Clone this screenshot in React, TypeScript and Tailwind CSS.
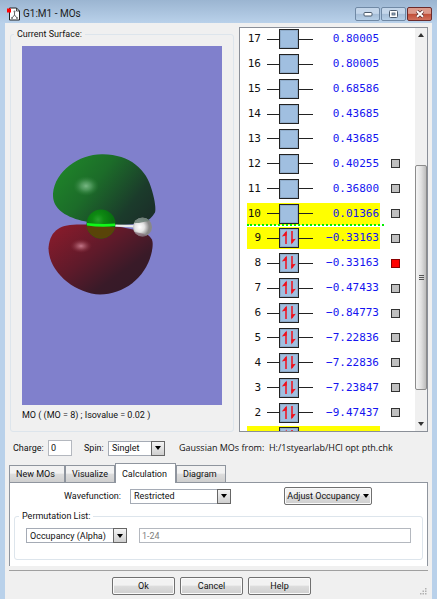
import type { ReactNode, SelectHTMLAttributes } from "react";
import { useState } from "react";
import clsx from "clsx";

type Orbital = {
  id: number;
  energy: string;
  cube?: boolean;
};

const ORBITALS: Orbital[] = [
  { id: 17, energy: "0.80005" },
  { id: 16, energy: "0.80005" },
  { id: 15, energy: "0.68586" },
  { id: 14, energy: "0.43685" },
  { id: 13, energy: "0.43685" },
  { id: 12, energy: "0.40255", cube: true },
  { id: 11, energy: "0.36800", cube: true },
  { id: 10, energy: "0.01366", cube: true },
  { id: 9, energy: "−0.33163", cube: true },
  { id: 8, energy: "−0.33163", cube: true },
  { id: 7, energy: "−0.47433", cube: true },
  { id: 6, energy: "−0.84773", cube: true },
  { id: 5, energy: "−7.22836", cube: true },
  { id: 4, energy: "−7.22836", cube: true },
  { id: 3, energy: "−7.23847", cube: true },
  { id: 2, energy: "−9.47437", cube: true },
];

const HOMO = 9;
const SELECTED = [10, 9];
const TABS = ["New MOs", "Visualize", "Calculation", "Diagram"];

const AppIcon = () => (
  <svg className="h-[14px] w-[13px]" viewBox="0 0 13 14" aria-hidden="true">
    <path d="M2.500 1h7l3 3v9H2.500z" fill="#fff" stroke="#222" strokeWidth="1" />
    <path d="M9.500 1v3h3" fill="none" stroke="#222" strokeWidth=".8" />
    <path d="M7.500 4v4M7.500 8l-2.500 3M7.500 8l2.500 3" stroke="#555" strokeWidth=".9" />
    <circle cx="7.500" cy="4.500" r="1" fill="#777" />
    <circle cx="5" cy="11" r="1" fill="#777" />
    <circle cx="10" cy="11" r="1" fill="#777" />
    <rect x="0" y="1.500" width="4" height="4" fill="#f00" />
  </svg>
);

const TitleButton = ({ label, danger, children }: { label: string; danger?: boolean; children: ReactNode }) => (
  <button
    aria-label={label}
    className={clsx(
      "flex h-[14px] w-[25px] items-center justify-center rounded-[2px] border",
      danger
        ? "border-[#6b2a2a] bg-linear-to-b from-[#dc9a8c] from-45% via-[#c04c36] via-50% to-[#d0705c]"
        : "border-[#7089a5] bg-linear-to-b from-[#c4d6ea] from-45% via-[#a5bdd7] via-50% to-[#b6cfe7]"
    )}
  >
    {children}
  </button>
);

const TitleBar = () => (
  <header className="-mx-[5px] flex h-[23px] shrink-0 items-center justify-between bg-linear-to-b from-[#9bb5d1] to-[#b9d1ea] pt-1 pr-[5px] pl-[7px]">
    <div className="flex items-center gap-[3px]">
      <AppIcon />
      <h1 className="font-[Roboto,sans-serif] text-[10px] leading-4 text-[#1c1c1c]">G1:M1 - MOs</h1>
    </div>
    <div className="flex gap-px">
      <TitleButton label="Minimize">
        <svg width="10" height="6" viewBox="0 0 10 6">
          <rect x="1" y="1.500" width="8" height="3.500" rx="1" fill="#fff" stroke="#4a5a6c" />
        </svg>
      </TitleButton>
      <TitleButton label="Maximize">
        <svg width="9" height="8" viewBox="0 0 9 8">
          <rect x=".5" y=".5" width="8" height="7" rx="1" fill="#fff" stroke="#4a5a6c" />
          <rect x="3" y="3" width="3" height="2" fill="#9db4cd" stroke="#4a5a6c" strokeWidth=".8" />
        </svg>
      </TitleButton>
      <TitleButton label="Close" danger>
        <svg width="10" height="8" viewBox="0 0 10 8">
          <path d="M2 1.200l6 5.600M8 1.200L2 6.800" stroke="#5a2a2a" strokeWidth="3.400" />
          <path d="M2 1.200l6 5.600M8 1.200L2 6.800" stroke="#fff" strokeWidth="2" />
        </svg>
      </TitleButton>
    </div>
  </header>
);

const Molecule = () => (
  <svg className="block h-full w-full bg-[#8080cc]" viewBox="22 46 200 358" role="img" aria-label="Molecular orbital surface">
    <defs>
      <linearGradient id="green" x1="0" y1=".2" x2="1" y2=".75">
        <stop offset="0" stopColor="#1f8629" />
        <stop offset=".4" stopColor="#1c6c29" />
        <stop offset=".8" stopColor="#1b3b2b" />
        <stop offset="1" stopColor="#1b3029" />
      </linearGradient>
      <linearGradient id="red" x1="0" y1=".15" x2=".8" y2=".9">
        <stop offset="0" stopColor="#861b2b" />
        <stop offset=".45" stopColor="#5f1a2a" />
        <stop offset=".8" stopColor="#391a28" />
        <stop offset="1" stopColor="#351a28" />
      </linearGradient>
      <radialGradient id="shineGreen">
        <stop offset="0" stopColor="#78b884" />
        <stop offset=".4" stopColor="#58a065" stopOpacity=".8" />
        <stop offset="1" stopColor="#2d8038" stopOpacity="0" />
      </radialGradient>
      <radialGradient id="shineRed">
        <stop offset="0" stopColor="#c4788a" />
        <stop offset=".4" stopColor="#a85868" stopOpacity=".7" />
        <stop offset="1" stopColor="#802838" stopOpacity="0" />
      </radialGradient>
      <radialGradient id="chlorine" cx=".4" cy=".35">
        <stop offset="0" stopColor="#28a02c" />
        <stop offset=".4" stopColor="#0e8a12" />
        <stop offset="1" stopColor="#087010" />
      </radialGradient>
      <radialGradient id="hydrogen" cx=".35" cy=".5">
        <stop offset="0" stopColor="#fff" />
        <stop offset=".5" stopColor="#e4e4e4" />
        <stop offset="1" stopColor="#888" />
      </radialGradient>
      <clipPath id="clLower">
        <path d="M86 225.500Q101 224 116 227v13H86z" />
      </clipPath>
      <clipPath id="hUpper">
        <path d="M132 217h20v3q-8 1-13 2.500h-7z" />
      </clipPath>
      <clipPath id="hLower">
        <path d="M132 231q9 1 18 5v3h-18z" />
      </clipPath>
    </defs>
    <path
      d="M103 153.700C130 154 147 169 152 190C155 200 156 209 155 212C152 217 149 219 146 221C132 225 115 225 103 223.500C88 222 68 219 58 208C53 202 53 197 53 193C55 170 80 153 103 153.700Z"
      fill="url(#green)"
    />
    <ellipse cx="86" cy="185.500" rx="13" ry="10" fill="url(#shineGreen)" />
    <path
      d="M70 224.500C90 223 122 225 143 231.500C153 237 153 240 152.500 247C149 275 125 294 100 294C75 293 49 272 48.500 248C49 237 54 226 70 224.500Z"
      fill="url(#red)"
    />
    <ellipse cx="81" cy="245.500" rx="11" ry="7" fill="url(#shineRed)" />
    <path d="M113 224l22 .6v2.400l-22 -1z" fill="#e8ece8" />
    <circle cx="101" cy="223.500" r="14.500" fill="url(#chlorine)" />
    <circle cx="101" cy="223.500" r="14.500" fill="#594408" clipPath="url(#clLower)" />
    <path d="M87 222.500q14 1.500 28 .6v2.400q-14 1.500-28 -.6z" fill="#10f818" />
    <circle cx="142.500" cy="226.500" r="9.500" fill="url(#hydrogen)" />
    <circle cx="142.500" cy="226.500" r="9.500" fill="#6c8078" fillOpacity=".85" clipPath="url(#hUpper)" />
    <circle cx="142.500" cy="226.500" r="9.500" fill="#7a5868" fillOpacity=".6" clipPath="url(#hLower)" />
  </svg>
);

const Occupancy = ({ filled }: { filled: boolean }) => (
  <div className="flex items-center">
    <span className="h-px w-3 bg-[#222]" />
    <span className="flex size-5 items-center justify-center border border-[#222] bg-[#a0bfe0] shadow-[inset_0_0_0_1px_#8fabc9]">
      {filled && (
        <svg width="16" height="16" viewBox="0 0 16 16">
          <path d="M5 14V2M11 1v12" stroke="#f0101c" strokeWidth="1.500" />
          <path d="M5.700 .5V5.500L.8 6.500z" fill="#f0101c" />
          <path d="M10.300 14.500V9.500L14.800 8.800z" fill="#f0101c" />
        </svg>
      )}
    </span>
    <span className="h-px w-[14px] bg-[#222]" />
  </div>
);

const OrbitalRow = ({ orbital, current, onPick }: { orbital: Orbital; current: boolean; onPick: () => void }) => (
  <li className="relative flex items-center justify-between pr-[15px] pl-[7px]">
    <div
      className={clsx(
        "flex h-[22px] w-[133px] items-center justify-between pr-px",
        SELECTED.includes(orbital.id) && "bg-[#ffff00]"
      )}
    >
      <div className="flex items-center gap-[6px]">
        <span className="w-[14px] text-right text-[#111]">{orbital.id}</span>
        <Occupancy filled={orbital.id <= HOMO} />
      </div>
      <span className="text-[#1414f0]">{orbital.energy}</span>
    </div>
    {orbital.cube && (
      <button
        aria-label={`Show orbital ${orbital.id}`}
        onClick={onPick}
        className={clsx("size-[9px] border", current ? "border-[#8b0000] bg-[#ff0000]" : "border-[#333] bg-[#c0c0c0]")}
      />
    )}
    {orbital.id === HOMO + 1 && (
      <span className="absolute bottom-0 left-[7px] w-[137px] border-t-2 border-dotted border-[#00f000]" />
    )}
  </li>
);

const ScrollBar = () => (
  <div className="flex w-3 shrink-0 flex-col items-center bg-[#f0f0f0] py-[5px]" aria-hidden="true">
    <svg width="6" height="4" viewBox="0 0 6 4">
      <path d="M3 0l3 4H0z" fill="#333" />
    </svg>
    <div className="flex-[128]" />
    <div className="flex w-full flex-[224] flex-col items-center justify-center gap-px rounded-[2px] border border-[#8c8c8c] bg-linear-to-r from-[#f5f5f5] via-[#e2e2e2] to-[#bcbcbc]">
      <i className="h-px w-[5px] bg-[#555]" />
      <i className="h-px w-[5px] bg-[#555]" />
      <i className="h-px w-[5px] bg-[#555]" />
    </div>
    <div className="flex-[32]" />
    <svg width="6" height="4" viewBox="0 0 6 4">
      <path d="M0 0h6L3 4z" fill="#333" />
    </svg>
  </div>
);

const OrbitalList = () => {
  const [current, setCurrent] = useState(8);

  return (
    <section className="flex w-[189px] shrink-0 overflow-hidden border border-[#8a8f98] bg-white" aria-label="Orbitals">
      <div className="flex-1">
        <ul className="-mt-px grid h-[398px] auto-rows-fr font-['DejaVu_Sans_Mono',monospace] text-[11px] leading-4">
          {ORBITALS.map((orbital) => (
            <OrbitalRow
              key={orbital.id}
              orbital={orbital}
              current={orbital.id === current}
              onPick={() => setCurrent(orbital.id)}
            />
          ))}
        </ul>
        {/* row 1 is mostly scrolled out of view */}
        <div className="mt-px ml-[7px] h-[22px] w-[133px] bg-[#ffff00] pt-px pl-5">
          <Occupancy filled />
        </div>
      </div>
      <ScrollBar />
    </section>
  );
};

const Select = ({ className, children, ...rest }: SelectHTMLAttributes<HTMLSelectElement>) => (
  <div className={clsx("relative", className)}>
    <select
      {...rest}
      className="block h-[15px] w-full appearance-none border border-[#a5abb5] bg-white pr-4 pl-[3px] leading-[12px]"
    >
      {children}
    </select>
    <span className="pointer-events-none absolute inset-y-0 right-0 flex w-[14px] items-center justify-center border border-[#666] bg-linear-to-b from-[#f4f4f4] to-[#cfcfcf]">
      <svg width="6" height="4" viewBox="0 0 6 4">
        <path d="M0 0h6L3 4z" fill="#000" />
      </svg>
    </span>
  </div>
);

const Button = ({ className, children }: { className?: string; children: ReactNode }) => (
  <button
    className={clsx(
      "flex h-[18px] items-center justify-center rounded-[2px] border border-[#707070] bg-linear-to-b from-[#f2f2f2] from-45% via-[#dddddd] via-50% to-[#cfcfcf] whitespace-nowrap shadow-[inset_0_0_0_1px_#fafafa]",
      className
    )}
  >
    {children}
  </button>
);

const CalculationPanel = () => (
  <div className="border border-b-0 border-[#8f959e] bg-white px-1 pt-[4px] pb-[6px]">
    <div className="flex items-center pr-[51px] pl-[50px]">
      <label htmlFor="wavefunction" className="w-[66px]">Wavefunction:</label>
      <Select id="wavefunction" className="w-[101px]">
        <option>Restricted</option>
      </Select>
      <Button className="ml-auto w-[88px] gap-[3px]">
        Adjust Occupancy
        <svg width="6" height="4" viewBox="0 0 6 4">
          <path d="M0 0h6L3 4z" fill="#000" />
        </svg>
      </Button>
    </div>
    <fieldset className="mt-1 rounded-[3px] border border-[#dde5ec] px-[11px] pt-[5px] pb-[16px]">
      <legend className="-ml-[7px] px-[3px] leading-[14px]">Permutation List:</legend>
      <div className="flex gap-3">
        <Select aria-label="Permutation type" className="w-[101px]">
          <option>Occupancy (Alpha)</option>
        </Select>
        <input
          aria-label="Permutation range"
          defaultValue="1-24"
          className="h-[15px] min-w-0 flex-1 border border-[#b4b8bf] bg-white px-[2px] text-[#808080]"
        />
      </div>
    </fieldset>
  </div>
);

const App = () => {
  const [tab, setTab] = useState("Calculation");

  return (
    <div className="flex h-screen min-h-[500px] w-full flex-col bg-[#b9d1ea] px-[5px] font-[Roboto,'Liberation_Sans',sans-serif] text-[9px] leading-[14px] text-[#111]">
      <TitleBar />
      <main className="flex min-h-0 flex-1 flex-col bg-[#f0f0f0] px-1 pt-1">
        <div className="flex min-h-0 flex-1 gap-[5px] pl-px">
          <fieldset className="flex min-w-0 flex-1 flex-col rounded-[3px] border border-[#dde5ec] px-[11px]">
            <legend className="-ml-[8px] px-[3px] leading-[14px]">Current Surface:</legend>
            <div className="flex h-full flex-col pt-[5px] pb-[9px]">
              <div className="min-h-0 flex-1">
                <Molecule />
              </div>
              <p className="pt-[3px]">MO ( (MO = 8) ; Isovalue = 0.02 )</p>
            </div>
          </fieldset>
          <OrbitalList />
        </div>

        <div className="flex items-center pt-2 pl-1">
          <label htmlFor="charge" className="w-[35px]">Charge:</label>
          <input id="charge" defaultValue="0" className="h-4 w-6 border border-[#b4b8bf] bg-white px-[2px]" />
          <label htmlFor="spin" className="ml-3 w-6">Spin:</label>
          <Select id="spin" className="w-[57px]">
            <option>Singlet</option>
          </Select>
          <p className="ml-[14px] font-['Open_Sans',sans-serif] whitespace-pre">
            Gaussian MOs from:  H:/1styearlab/HCl opt pth.chk
          </p>
        </div>

        <div className="mt-[7px] flex items-end" role="tablist">
          {TABS.map((name) => (
            <button
              key={name}
              role="tab"
              aria-selected={tab === name}
              onClick={() => setTab(name)}
              className={clsx(
                "border border-b-0 border-[#8f959e] px-[6px] text-left",
                tab === name
                  ? "relative -mb-px h-5 bg-white"
                  : "h-[17px] bg-linear-to-b from-[#f2f2f2] from-45% via-[#dddddd] via-50% to-[#cfcfcf]",
                name === "New MOs" && "w-14",
                name === "Calculation" && "w-[61px]",
                (name === "Visualize" || name === "Diagram") && "w-[50px]"
              )}
            >
              {name}
            </button>
          ))}
        </div>
        <CalculationPanel />

        <footer className="relative mt-1 flex justify-center gap-[5px] border-t border-[#a0a0a0] pt-[6px] pr-[14px] pb-[4px]">
          <Button className="w-[63px]">Ok</Button>
          <Button className="w-[63px]">Cancel</Button>
          <Button className="w-[63px]">Help</Button>
          <svg className="absolute right-px bottom-1 size-[7px]" viewBox="0 0 7 7" fill="#b0b0b0" aria-hidden="true">
            <path d="M5 0h1.500v1.500H5zM5 2.500h1.500V4H5zM5 5h1.500v1.500H5zM2.500 2.500H4V4H2.500zM2.500 5H4v1.500H2.500zM0 5h1.500v1.500H0z" />
          </svg>
        </footer>
      </main>
    </div>
  );
};

export default App;
